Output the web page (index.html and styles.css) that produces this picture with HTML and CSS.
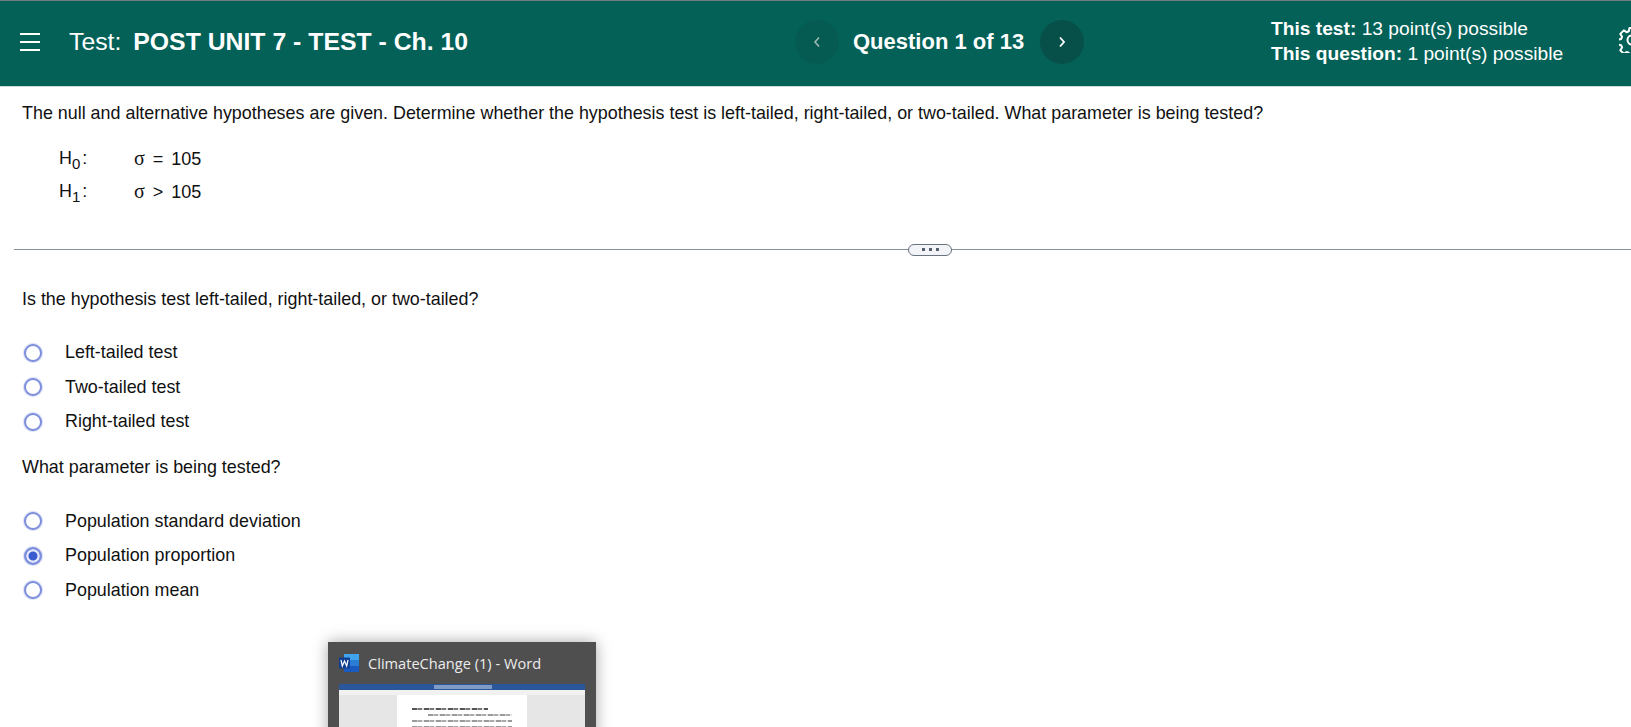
FILE: index.html
```html
<!DOCTYPE html>
<html lang="en">
<head>
<meta charset="utf-8">
<title>Test: POST UNIT 7 - TEST - Ch. 10</title>
<link rel="stylesheet" href="styles.css">
</head>
<body>
<header class="topbar">
  <svg class="menu-icon" width="22" height="20" viewBox="0 0 22 20"><path d="M1 2h20M1 10h20M1 18h20" stroke="#fff" stroke-width="2" fill="none"/></svg>
  <h1 class="title"><span class="title-label">Test:</span> <strong>POST UNIT 7 - TEST - Ch. 10</strong></h1>
  <nav class="pager">
    <span class="pager-btn pager-prev"><svg width="10" height="14" viewBox="0 0 10 14"><path d="M7 2.500 3 7l4 4.500" stroke="#9fb9b4" stroke-width="1.600" fill="none"/></svg></span>
    <span class="pager-text">Question 1 of 13</span>
    <span class="pager-btn pager-next"><svg width="10" height="14" viewBox="0 0 10 14"><path d="M3 2.500 7 7l-4 4.500" stroke="#fff" stroke-width="1.800" fill="none"/></svg></span>
  </nav>
  <div class="points">
    <div><b>This test:</b> 13 point(s) possible</div>
    <div><b>This question:</b> 1 point(s) possible</div>
  </div>
  <svg class="gear" width="26" height="26" viewBox="-13 -13 26 26"><g fill="none" stroke="#fff" stroke-width="2" stroke-linejoin="round"><path d="M-2.500-12h5l.7 3.300 2.200.9 2.800-1.800 3.500 3.500-1.800 2.800.9 2.200 3.300.7v5l-3.300.7-.9 2.200 1.800 2.800-3.500 3.500-2.800-1.800-2.200.9-.7 3.300h-5l-.7-3.300-2.200-.9-2.800 1.800-3.500-3.500 1.800-2.800-.9-2.200-3.300-.7v-5l3.300-.7.9-2.200-1.800-2.800 3.500-3.500 2.800 1.800 2.200-.9z"/><circle r="4.500"/></g></svg>
</header>

<main class="content">
  <p class="prompt">The null and alternative hypotheses are given. Determine whether the hypothesis test is left-tailed, right-tailed, or two-tailed. What parameter is being tested?</p>
  <div class="hypotheses">
    <div class="hyp-row"><span class="hyp-name">H<sub>0</sub>:</span><span class="hyp-expr"><span class="sigma">σ</span> = 105</span></div>
    <div class="hyp-row"><span class="hyp-name">H<sub>1</sub>:</span><span class="hyp-expr"><span class="sigma">σ</span> &gt; 105</span></div>
  </div>
  <div class="divider"><span class="divider-pill"><i></i><i></i><i></i></span></div>

  <p class="question q-first">Is the hypothesis test left-tailed, right-tailed, or two-tailed?</p>
  <ul class="options">
    <li class="option"><span class="radio"></span>Left-tailed test</li>
    <li class="option"><span class="radio"></span>Two-tailed test</li>
    <li class="option"><span class="radio"></span>Right-tailed test</li>
  </ul>
  <p class="question q-second">What parameter is being tested?</p>
  <ul class="options">
    <li class="option"><span class="radio"></span>Population standard deviation</li>
    <li class="option"><span class="radio radio-on"></span>Population proportion</li>
    <li class="option"><span class="radio"></span>Population mean</li>
  </ul>
</main>

<aside class="preview">
  <div class="preview-head">
    <svg width="20" height="18" viewBox="0 0 20 18"><rect x="5" y="0" width="15" height="6" fill="#41a5ee"/><rect x="5" y="6" width="15" height="6" fill="#2b7cd3"/><rect x="5" y="12" width="15" height="6" fill="#185abd"/><rect x="0" y="3.500" width="11" height="11" fill="#103f91"/><path d="M2 6l1.300 6L5.500 7l2.200 5L9 6" stroke="#fff" stroke-width="1.200" fill="none"/></svg>
    <span>ClimateChange (1) - Word</span>
  </div>
  <div class="thumb">
    <div class="thumb-title"><span class="thumb-search"></span></div>
    <div class="thumb-ribbon"></div>
    <div class="thumb-body">
      <div class="thumb-page">
        <i class="l1"></i><i class="l2"></i><i class="l3"></i><i class="l3"></i>
      </div>
    </div>
  </div>
</aside>
</body>
</html>
```
FILE: styles.css
```css
html, body { margin: 0; padding: 0; height: 727px; overflow: hidden; background: #fff; }
body { font-family: "Liberation Sans", Arial, sans-serif; color: #111; position: relative; width: 1631px; }

.topbar { box-sizing: border-box; background: #036157; border-top: 1px solid #6f7f80; border-bottom: 1px solid #d4dcdb; height: 87px; padding-bottom: 4px; display: flex; align-items: center; color: #fff; position: relative; overflow: hidden; }
.menu-icon { margin-left: 19px; flex: none; }
.title { margin: 0 0 0 28px; font-size: 24.800px; font-weight: 400; white-space: nowrap; width: 726px; flex: none; }
.title-label { margin-right: 5px; }
.pager { display: flex; align-items: center; width: 290px; flex: none; }
.pager-btn { width: 44px; height: 44px; border-radius: 50%; display: flex; align-items: center; justify-content: center; flex: none; }
.pager-prev { background: #055b52; }
.pager-next { background: #07504a; }
.pager-text { font-size: 22px; font-weight: 700; margin: 0 16px 0 14px; white-space: nowrap; }
.points { font-size: 19.200px; line-height: 24.500px; margin-left: 186px; width: 300px; white-space: nowrap; flex: none; }
.gear { position: absolute; left: 1619px; top: 26px; }

.content { padding: 0 0 0 22px; font-size: 17.900px; }
.prompt { margin: 0; padding-top: 15px; line-height: 22px; white-space: nowrap; }
.hypotheses { margin: 18px 0 0 37px; }
.hyp-row { display: flex; height: 33.300px; align-items: center; }
.hyp-name { width: 75px; }
.hyp-name sub { font-size: 15px; line-height: 0; margin-right: 2px; }
.hyp-expr { word-spacing: 3px; font-size: 18px; }
.sigma { font-family: "Liberation Serif", serif; font-size: 20px; }
.divider { margin: 40px 0 0 -8px; border-top: 1px solid #858e9c; height: 0; position: relative; }
.divider-pill { position: absolute; left: 894px; top: -6px; width: 42px; height: 10px; border: 1px solid #69727f; border-radius: 6px; background: #f2f4f7; display: flex; align-items: center; justify-content: center; gap: 4px; }
.divider-pill i { width: 3px; height: 3px; background: #555e6b; }
.question { margin: 0; line-height: 22px; white-space: nowrap; }
.q-first { margin-top: 38px; }
.q-second { margin-top: 17px; }
.options { list-style: none; margin: 26px 0 0; padding: 0; }
.option { display: flex; align-items: center; height: 34.500px; white-space: nowrap; }
.radio { width: 14px; height: 14px; border: 2px solid #7d8fdc; border-radius: 50%; margin-left: 2px; margin-right: 23px; flex: none; background: #fff; box-shadow: 0 0 1px 1px #d5dbf4; }
.radio-on { background: #3a5ad0; box-shadow: inset 0 0 0 2.500px #e4e8fa, 0 0 1px 1px #d5dbf4; }

.preview { position: absolute; left: 328px; top: 642px; width: 268px; height: 120px; background: #4f4f4f; box-shadow: 0 0 14px rgba(0,0,0,.35); color: #ececec; }
.preview-head { display: flex; align-items: center; gap: 9px; height: 42px; padding-left: 11px; font-family: "Open Sans", sans-serif; font-size: 14.600px; }
.thumb { margin: 0 11px; background: #e6e6e6; height: 70px; }
.thumb-title { height: 6px; background: #2b579a; position: relative; }
.thumb-search { position: absolute; left: 95px; top: 1px; width: 58px; height: 4px; background: #7f9cc6; }
.thumb-ribbon { height: 5px; background: #f1f1f1; }
.thumb-body { display: flex; justify-content: center; }
.thumb-page { width: 130px; height: 60px; background: #fff; padding: 13px 15px; box-sizing: border-box; display: flex; flex-direction: column; gap: 4px; }
.thumb-page i { display: block; height: 2px; background: repeating-linear-gradient(90deg, #999 0 5px, #ccc 5px 6px, #aaa 6px 10px, #e4e4e4 10px 12px); }
.thumb-page .l1 { width: 76%; background: repeating-linear-gradient(90deg, #555 0 5px, #aaa 5px 6px, #777 6px 10px, #ddd 10px 12px); }
.thumb-page .l2 { margin-left: 16px; }
```
